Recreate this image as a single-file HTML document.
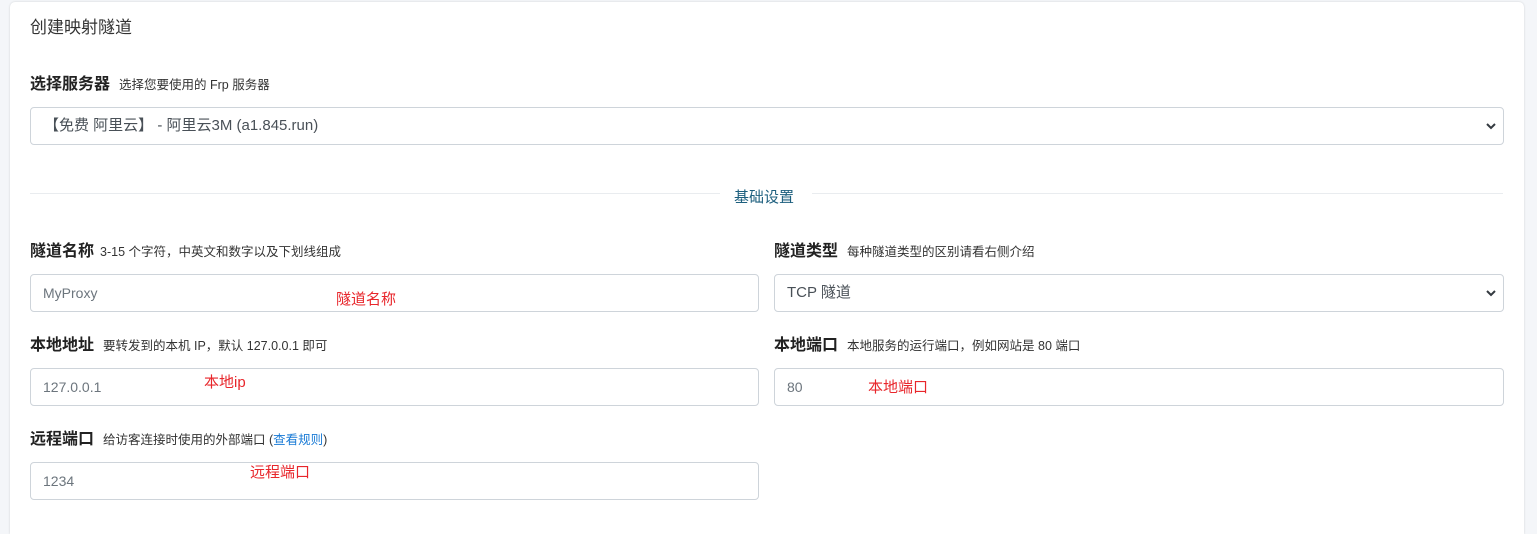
<!DOCTYPE html>
<html><head><meta charset="utf-8"><style>
html,body{margin:0;width:1537px;height:534px;overflow:hidden}
body{background:#f4f6f9;font-family:"Liberation Sans","Noto Sans CJK SC",sans-serif;position:relative}
.card{position:absolute;left:10px;top:2px;width:1514px;height:532px;background:#fff;border-radius:5px 5px 0 0;box-shadow:0 0 2px rgba(0,0,0,.15)}
.a{position:absolute;white-space:nowrap}
.lbl{font-size:16px;font-weight:bold;color:#222}
.lbl span{font-size:12.5px;font-weight:normal;color:#333;margin-left:9px}
.in{position:absolute;border:1px solid #ced4da;border-radius:4px;background:#fff;box-sizing:border-box;height:38px;font-size:14px;color:#6c757d;padding-left:12px;line-height:36px}
.red{position:absolute;color:#e8262b;font-size:15px;white-space:nowrap}
.chev{position:absolute;right:6px;top:12px}
</style></head><body>
<div class="card"></div>
<div class="a" style="left:30px;top:13px;font-size:17px;color:#333">创建映射隧道</div>
<div class="a lbl" style="left:30px;top:70px">选择服务器<span>选择您要使用的 Frp 服务器</span></div>
<div class="in" style="left:30px;top:107px;width:1474px;color:#495057;font-size:15px;padding-left:13px">【免费 阿里云】 - 阿里云3M (a1.845.run)
<svg class="chev" width="12" height="12" viewBox="0 0 12 12"><path d="M2 4l4 4 4-4" stroke="#343a40" stroke-width="2" fill="none"/></svg></div>
<div class="a" style="left:30px;top:193px;width:690px;border-top:1px solid #e9ecef"></div>
<div class="a" style="left:812px;top:193px;width:691px;border-top:1px solid #e9ecef"></div>
<div class="a" style="left:734px;top:186px;font-size:15px;color:#1d5f7e">基础设置</div>

<div class="a lbl" style="left:30px;top:237px">隧道名称<span style="margin-left:6px">3-15 个字符，中英文和数字以及下划线组成</span></div>
<div class="a lbl" style="left:774px;top:237px">隧道类型<span>每种隧道类型的区别请看右侧介绍</span></div>
<div class="in" style="left:30px;top:274px;width:729px">MyProxy</div>
<div class="in" style="left:774px;top:274px;width:730px;color:#495057;font-size:15px">TCP 隧道
<svg class="chev" width="12" height="12" viewBox="0 0 12 12"><path d="M2 4l4 4 4-4" stroke="#343a40" stroke-width="2" fill="none"/></svg></div>
<div class="red" style="left:336px;top:288px">隧道名称</div>

<div class="a lbl" style="left:30px;top:331px">本地地址<span>要转发到的本机 IP，默认 127.0.0.1 即可</span></div>
<div class="a lbl" style="left:774px;top:331px">本地端口<span>本地服务的运行端口，例如网站是 80 端口</span></div>
<div class="in" style="left:30px;top:368px;width:729px">127.0.0.1</div>
<div class="in" style="left:774px;top:368px;width:730px">80</div>
<div class="red" style="left:204px;top:371px">本地ip</div>
<div class="red" style="left:868px;top:376px">本地端口</div>

<div class="a lbl" style="left:30px;top:425px">远程端口<span>给访客连接时使用的外部端口 (<span style="margin:0;font-size:12.5px;color:#1a7bd6">查看规则</span>)</span></div>
<div class="in" style="left:30px;top:462px;width:729px">1234</div>
<div class="red" style="left:250px;top:461px">远程端口</div>
</body></html>
